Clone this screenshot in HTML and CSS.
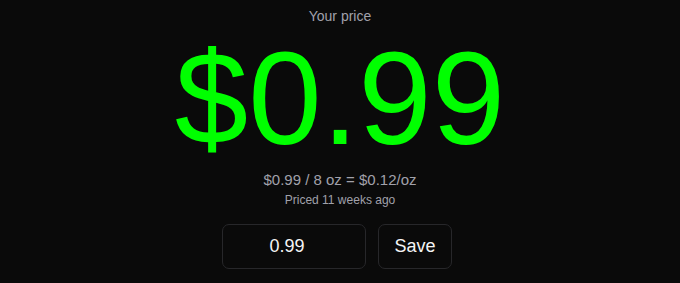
FILE: index.html
```html
<!DOCTYPE html>
<html>
<head>
<meta charset="utf-8">
<link rel="stylesheet" href="styles.css">
</head>
<body>
<main class="wrap">
  <div class="label">Your price</div>
  <div class="price">$0.99</div>
  <div class="unit">$0.99 / 8 oz = $0.12/oz</div>
  <div class="ago">Priced 11 weeks ago</div>
  <form class="row">
    <input class="field" type="text" value="0.99">
    <button class="save" type="button">Save</button>
  </form>
</main>
</body>
</html>
```
FILE: styles.css
```css
html, body {
  margin: 0;
  padding: 0;
  background: #0a0a0a;
  height: 100%;
}
body {
  font-family: "Liberation Sans", Arial, sans-serif;
  color: #e5e5e5;
}
.wrap {
  display: flex;
  flex-direction: column;
  align-items: center;
  padding-top: 7px;
}
.label {
  font-size: 14px;
  line-height: 19px;
  color: #a1a1aa;
}
.price {
  font-size: 132px;
  line-height: 146px;
  color: #00ff00;
}
.unit {
  font-size: 15px;
  line-height: 16px;
  color: #a1a1aa;
}
.ago {
  margin-top: 4px;
  font-size: 12px;
  line-height: 16px;
  color: #a1a1aa;
}
.row {
  display: flex;
  gap: 12px;
  margin: 16px 6px 0 0;
}
.field {
  box-sizing: border-box;
  width: 144px;
  height: 45px;
  background: #0a0a0a;
  border: 1px solid #27272a;
  border-radius: 7px;
  color: #f4f4f5;
  font-family: inherit;
  font-size: 18px;
  text-align: center;
  outline: none;
  padding: 0 22px 0 8px;
}
.save {
  box-sizing: border-box;
  width: 74px;
  height: 45px;
  background: #0a0a0a;
  border: 1px solid #27272a;
  border-radius: 7px;
  color: #f4f4f5;
  font-family: inherit;
  font-size: 18px;
  cursor: pointer;
  padding: 0;
}
```
